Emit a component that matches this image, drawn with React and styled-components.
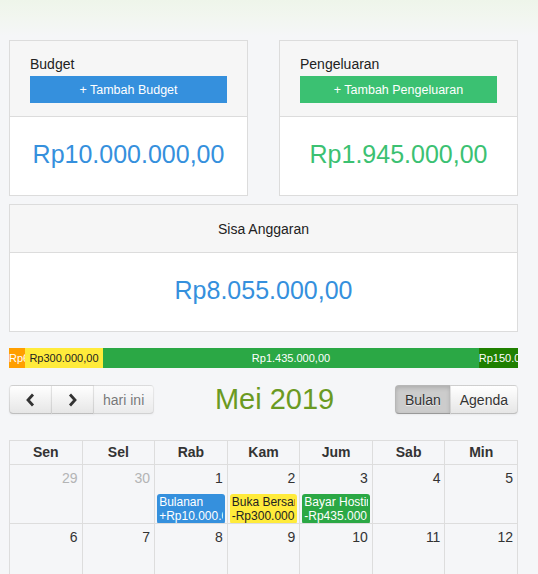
import React from 'react';
import styled, { createGlobalStyle } from 'styled-components';

const GlobalStyle = createGlobalStyle`
  body {
    margin: 0;
    background: #f5f6f8;
    font-family: "Liberation Sans", Arial, sans-serif;
    color: #333;
  }
`;

const TopBand = styled.div`
  height: 40px;
  background: linear-gradient(to bottom, #eef5ea 0%, #f2f6f0 45%, #f5f6f8 90%);
`;

const Page = styled.div`
  width: 509px;
  padding: 0 20px 0 9px;
`;

const CardRow = styled.div`
  display: grid;
  grid-template-columns: 239px 239px;
  justify-content: space-between;
`;

const Card = styled.div`
  border: 1px solid #dcdcdc;
  background: #fff;
  margin-top: ${({ $mt }) => $mt || 0}px;
`;

const CardHeader = styled.div`
  background: #f6f6f6;
  border-bottom: 1px solid #dcdcdc;
  padding: ${({ $center }) => ($center ? '0 20px' : '13px 20px 13px')};
  height: ${({ $center }) => ($center ? '47px' : 'auto')};
  display: flex;
  flex-direction: column;
  justify-content: center;
  align-items: ${({ $center }) => ($center ? 'center' : 'stretch')};
  font-size: 14px;
`;

const CardTitle = styled.div`
  line-height: 20px;
  color: #222;
`;

const AddButton = styled.button`
  margin-top: 2px;
  height: 27px;
  border: none;
  background: ${({ $color }) => $color};
  color: #fff;
  font-family: inherit;
  font-size: 12.5px;
  padding: 0;
  cursor: pointer;
`;

const CardBody = styled.div`
  height: 78px;
  display: flex;
  align-items: center;
  justify-content: center;
  padding-bottom: 4px;
  box-sizing: border-box;
  font-size: 25px;
  color: ${({ $color }) => $color};
`;

const Bar = styled.div`
  display: flex;
  height: 20px;
  margin-top: 16px;
  overflow: hidden;
`;

const Segment = styled.div`
  flex: ${({ $value }) => $value} 1 0;
  min-width: 0;
  background: ${({ $bg }) => $bg};
  color: ${({ $fg }) => $fg};
  font-size: 11px;
  line-height: 20px;
  text-align: center;
  white-space: nowrap;
  overflow: hidden;
`;

const Toolbar = styled.div`
  display: flex;
  align-items: center;
  justify-content: space-between;
  height: 29px;
  margin-top: 17px;
`;

const Group = styled.div`
  display: flex;
`;

const ToolButton = styled.button`
  height: 29px;
  padding: 0 ${({ $icon }) => ($icon ? '15px' : '9px')};
  font-family: inherit;
  font-size: 14px;
  color: #333;
  display: flex;
  align-items: center;
  border: 1px solid;
  border-color: rgba(0, 0, 0, 0.1) rgba(0, 0, 0, 0.1) rgba(0, 0, 0, 0.25);
  background: ${({ $active }) => ($active ? '#cccccc' : 'linear-gradient(to bottom, #ffffff, #e6e6e6)')};
  box-shadow: ${({ $active }) =>
    $active
      ? 'inset 0 2px 4px rgba(0,0,0,0.15), 0 1px 2px rgba(0,0,0,0.05)'
      : 'inset 0 1px 0 rgba(255,255,255,0.2), 0 1px 2px rgba(0,0,0,0.05)'};
  text-shadow: 0 1px 1px rgba(255, 255, 255, 0.75);
  opacity: ${({ disabled }) => (disabled ? 0.65 : 1)};
  border-radius: 0;
  margin-left: -1px;
  &:first-child {
    border-radius: 4px 0 0 4px;
    margin-left: 0;
  }
  &:last-child {
    border-radius: 0 4px 4px 0;
  }
`;

const Title = styled.h2`
  margin: 0;
  font-size: 29px;
  font-weight: normal;
  color: #6b9a22;
  line-height: 29px;
`;

const Calendar = styled.div`
  margin-top: 26px;
  display: grid;
  grid-template-columns: repeat(7, 1fr);
  border-top: 1px solid #dddddd;
  border-left: 1px solid #dddddd;
`;

const HeadCell = styled.div`
  height: 23px;
  line-height: 23px;
  text-align: center;
  font-weight: bold;
  font-size: 14px;
  border-right: 1px solid #dddddd;
  border-bottom: 1px solid #dddddd;
`;

const DayCell = styled.div`
  height: 58px;
  overflow: hidden;
  border-right: 1px solid #dddddd;
  border-bottom: 1px solid #dddddd;
`;

const DayNum = styled.div`
  text-align: right;
  font-size: 14px;
  line-height: 20px;
  padding: 3px 4px 0;
  color: ${({ $other }) => ($other ? '#b3b4b5' : '#333')};
`;

const Event = styled.div`
  margin: 6px 2px 0;
  padding: 1px 2px;
  border-radius: 3px;
  background: ${({ $bg }) => $bg};
  color: ${({ $fg }) => $fg};
  font-size: 12px;
  line-height: 14px;
  div {
    white-space: nowrap;
    overflow: hidden;
  }
`;

function Chevron({ dir }) {
  const points = dir === 'left' ? '8,1.5 3,7 8,12.5' : '3,1.5 8,7 3,12.5';
  return (
    <svg width="11" height="14" viewBox="0 0 11 14">
      <polyline points={points} fill="none" stroke="#333" strokeWidth="2.8" />
    </svg>
  );
}

const segments = [
  { value: 60, bg: '#ff9f00', fg: '#fff', label: 'Rp60.000,00' },
  { value: 300, bg: '#ffeb3b', fg: '#222', label: 'Rp300.000,00' },
  { value: 1435, bg: '#2ba845', fg: '#fff', label: 'Rp1.435.000,00' },
  { value: 150, bg: '#1f8000', fg: '#fff', label: 'Rp150.000,00' },
];

const days = ['Sen', 'Sel', 'Rab', 'Kam', 'Jum', 'Sab', 'Min'];

const weeks = [
  [
    { n: 29, other: true },
    { n: 30, other: true },
    { n: 1, ev: { bg: '#3590dd', fg: '#fff', title: 'Bulanan', amount: '+Rp10.000.000' } },
    { n: 2, ev: { bg: '#ffeb3b', fg: '#222', title: 'Buka Bersama', amount: '-Rp300.000' } },
    { n: 3, ev: { bg: '#2ba845', fg: '#fff', title: 'Bayar Hosting', amount: '-Rp435.000' } },
    { n: 4 },
    { n: 5 },
  ],
  [{ n: 6 }, { n: 7 }, { n: 8 }, { n: 9 }, { n: 10 }, { n: 11 }, { n: 12 }],
];

export default function App() {
  return (
    <>
      <GlobalStyle />
      <TopBand />
      <Page>
        <CardRow>
          <Card>
            <CardHeader>
              <CardTitle>Budget</CardTitle>
              <AddButton $color="#3590dd">+ Tambah Budget</AddButton>
            </CardHeader>
            <CardBody $color="#3590dd">Rp10.000.000,00</CardBody>
          </Card>
          <Card>
            <CardHeader>
              <CardTitle>Pengeluaran</CardTitle>
              <AddButton $color="#3bc172">+ Tambah Pengeluaran</AddButton>
            </CardHeader>
            <CardBody $color="#3bc172">Rp1.945.000,00</CardBody>
          </Card>
        </CardRow>

        <Card $mt={8}>
          <CardHeader $center>
            <CardTitle>Sisa Anggaran</CardTitle>
          </CardHeader>
          <CardBody $color="#3590dd">Rp8.055.000,00</CardBody>
        </Card>

        <Bar>
          {segments.map((s) => (
            <Segment key={s.label} $value={s.value} $bg={s.bg} $fg={s.fg}>
              {s.label}
            </Segment>
          ))}
        </Bar>

        <Toolbar>
          <Group>
            <ToolButton $icon>
              <Chevron dir="left" />
            </ToolButton>
            <ToolButton $icon>
              <Chevron dir="right" />
            </ToolButton>
            <ToolButton disabled>hari ini</ToolButton>
          </Group>
          <Title>Mei 2019</Title>
          <Group>
            <ToolButton $active>Bulan</ToolButton>
            <ToolButton>Agenda</ToolButton>
          </Group>
        </Toolbar>

        <Calendar>
          {days.map((d) => (
            <HeadCell key={d}>{d}</HeadCell>
          ))}
          {weeks.flat().map((day) => (
            <DayCell key={`${day.n}-${day.other ? 'o' : 'm'}`}>
              <DayNum $other={day.other}>{day.n}</DayNum>
              {day.ev && (
                <Event $bg={day.ev.bg} $fg={day.ev.fg}>
                  <div>{day.ev.title}</div>
                  <div>{day.ev.amount}</div>
                </Event>
              )}
            </DayCell>
          ))}
        </Calendar>
      </Page>
    </>
  );
}
